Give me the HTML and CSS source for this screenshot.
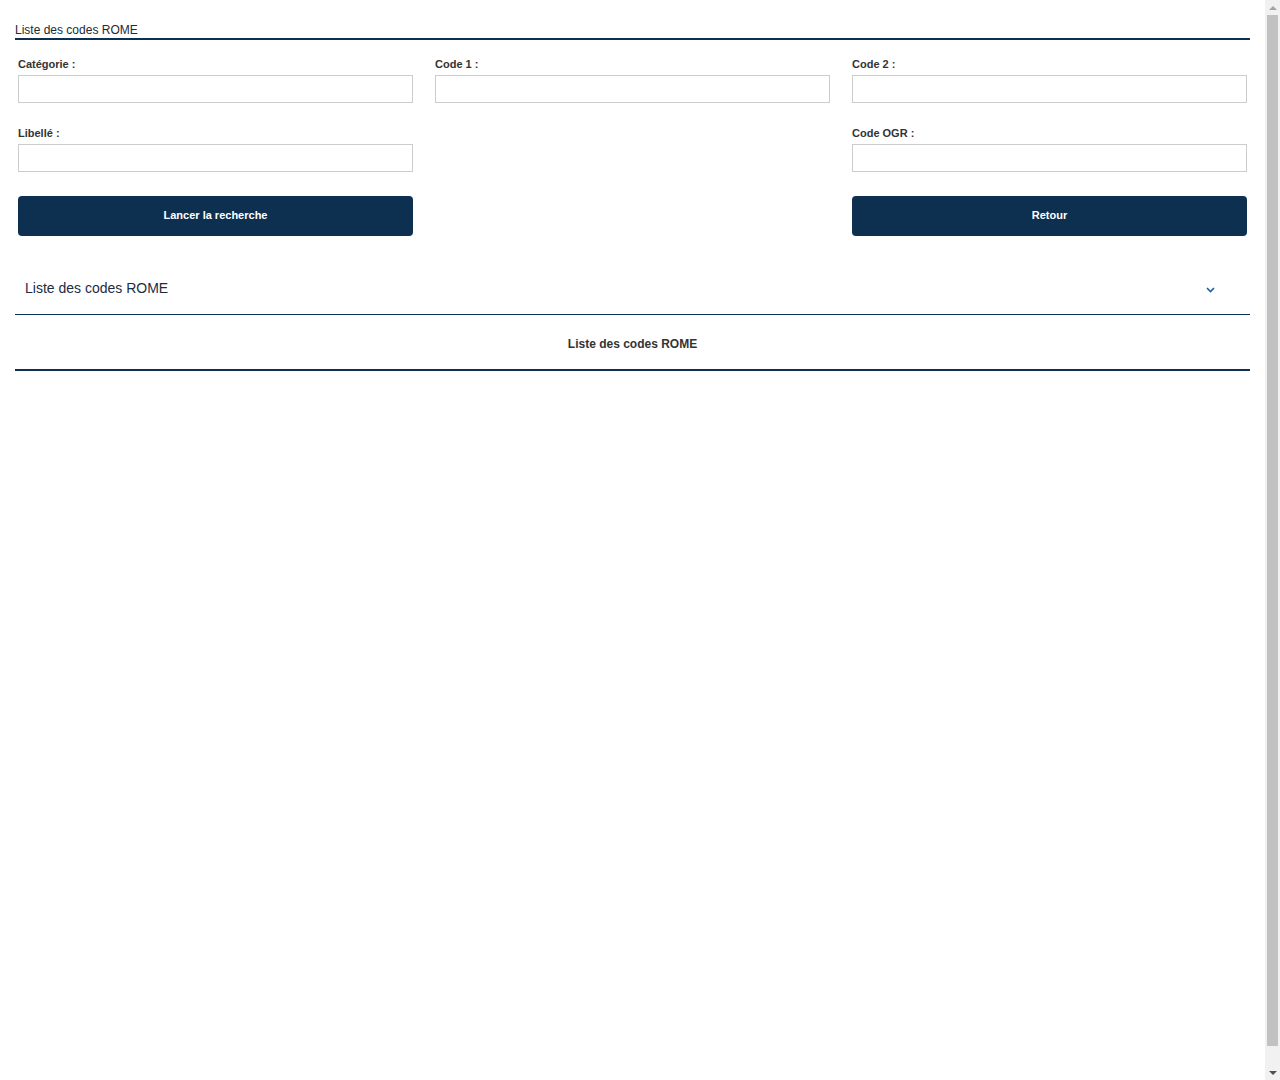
FILE: index.html
```html
<!DOCTYPE html>
<html lang="fr">
<head>
<meta charset="utf-8">
<title>Liste des codes ROME</title>
<link rel="stylesheet" href="styles.css">
</head>
<body>
<div class="page">
  <div class="page-title">Liste des codes ROME</div>
  <form class="search-form">
    <div class="field">
      <label>Catégorie :</label>
      <input type="text">
    </div>
    <div class="field">
      <label>Code 1 :</label>
      <input type="text">
    </div>
    <div class="field">
      <label>Code 2 :</label>
      <input type="text">
    </div>
    <div class="field">
      <label>Libellé :</label>
      <input type="text">
    </div>
    <div class="field empty"></div>
    <div class="field">
      <label>Code OGR :</label>
      <input type="text">
    </div>
    <div class="actions">
      <button type="button" class="btn">Lancer la recherche</button>
    </div>
    <div class="actions empty"></div>
    <div class="actions">
      <button type="button" class="btn">Retour</button>
    </div>
  </form>
  <div class="accordion-header">
    <span class="accordion-title">Liste des codes ROME</span>
    <svg class="chevron" width="9" height="6" viewBox="0 0 9 6"><polyline points="1,1 4.5,4.5 8,1" fill="none" stroke="#1f5fa0" stroke-width="1.6"/></svg>
  </div>
  <div class="list-caption">Liste des codes ROME</div>
</div>
<div class="fake-scrollbar" aria-hidden="true">
  <div class="sb-arrow sb-up"></div>
  <div class="sb-track"><div class="sb-thumb"></div></div>
  <div class="sb-arrow sb-down"></div>
</div>
</body>
</html>
```

FILE: styles.css
```css
html, body {
  margin: 0;
  padding: 0;
  background: #ffffff;
}
body {
  font-family: "Liberation Sans", Arial, sans-serif;
  color: #333333;
}
.page {
  padding: 22px 30px 0 15px;
  min-height: 1080px;
  box-sizing: border-box;
}
.page-title {
  font-size: 12px;
  line-height: 16px;
  color: #222a35;
  border-bottom: 2px solid #0e3050;
}
.search-form {
  display: grid;
  grid-template-columns: 395px 395px 395px;
  column-gap: 22px;
  row-gap: 23px;
  padding: 17px 3px 0 3px;
}
.field {
  display: flex;
  flex-direction: column;
}
.field label {
  font-size: 11px;
  font-weight: bold;
  line-height: 14px;
  color: #333333;
  margin-bottom: 4px;
}
.field input {
  height: 28px;
  box-sizing: border-box;
  border: 1px solid #cccccc;
  border-radius: 0;
  padding: 0 8px;
  margin: 0;
  font-family: inherit;
  font-size: 12px;
  outline: none;
}
.actions {
  margin-top: 1px;
}
.btn {
  width: 100%;
  height: 40px;
  border: none;
  border-radius: 4px;
  background: #0e3050;
  color: #ffffff;
  font-family: "Liberation Sans", Arial, sans-serif;
  font-size: 11px;
  font-weight: bold;
  line-height: 13px;
  padding: 0 0 2px 0;
  cursor: pointer;
}
.accordion-header {
  margin-top: 26px;
  height: 52px;
  display: flex;
  align-items: center;
  justify-content: space-between;
  padding: 0 35px 0 10px;
  border-bottom: 1px solid #0e3050;
}
.accordion-title {
  font-size: 14px;
  color: #1c2c44;
}
.chevron {
  margin-top: 4px;
}
.list-caption {
  height: 56px;
  box-sizing: border-box;
  padding-top: 22px;
  line-height: 14px;
  text-align: center;
  font-size: 12px;
  font-weight: bold;
  color: #333333;
  border-bottom: 2px solid #0e3050;
}
.fake-scrollbar {
  position: fixed;
  top: 0;
  right: 0;
  width: 15px;
  height: 100vh;
  background: #f1f1f1;
  display: flex;
  flex-direction: column;
}
.sb-arrow {
  height: 15px;
  display: flex;
  align-items: center;
  justify-content: center;
}
.sb-up::before {
  content: "";
  border-left: 4px solid transparent;
  border-right: 4px solid transparent;
  border-bottom: 4px solid #a3a3a3;
}
.sb-down::before {
  content: "";
  border-left: 4px solid transparent;
  border-right: 4px solid transparent;
  border-top: 4px solid #505050;
}
.sb-track {
  flex: 1;
  padding: 0 2px;
  display: flex;
  flex-direction: column;
}
.sb-thumb {
  height: 1031px;
  background: #c1c1c1;
}
```
